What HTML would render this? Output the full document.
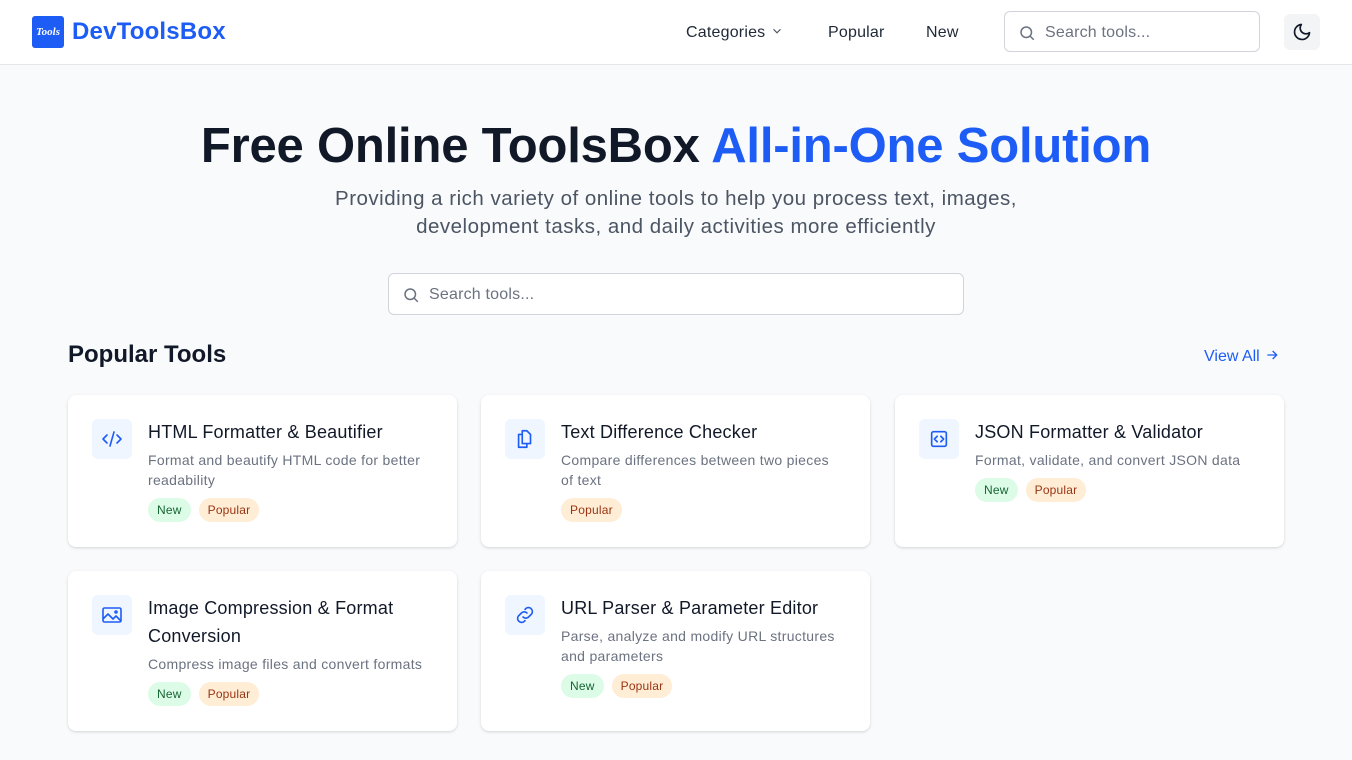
<!DOCTYPE html>
<html><head><meta charset="utf-8"><style>
*{box-sizing:border-box;margin:0;padding:0}
body{width:1352px;height:760px;overflow:hidden;background:#f9fafb;font-family:"Liberation Sans",sans-serif;color:#111827}
header{height:65px;background:#fff;border-bottom:1px solid #e5e7eb;position:relative}
.logo{position:absolute;left:32px;top:16px;display:flex;align-items:center}
.lbox{width:32px;height:32px;background:#1d5cf5;border-radius:3px;color:#fff;font:italic bold 11px "Liberation Serif",serif;display:flex;align-items:center;justify-content:center}
.lname{margin-left:8px;color:#1d5cf5;font-weight:bold;font-size:24px;letter-spacing:0.2px}
.nav{position:absolute;top:24px;font-size:16px;color:#1f2937;letter-spacing:0.2px}
.hs{position:absolute;left:1004px;top:11px;width:256px;height:41px;border:1px solid #d1d5db;border-radius:6px;font-size:16px;color:#6b7280;padding:12px 0 0 40px;letter-spacing:0.2px}
.dark{position:absolute;left:1284px;top:14px;width:36px;height:36px;background:#f3f4f6;border-radius:6px;display:flex;align-items:center;justify-content:center}
h1{position:absolute;top:118px;width:100%;text-align:center;font-size:49px;font-weight:bold;letter-spacing:-0.2px}
h1 span{color:#1d5cf5}
.sub{position:absolute;top:185px;width:100%;text-align:center;font-size:20.5px;line-height:28px;color:#4b5563;letter-spacing:0.5px}
.ms{position:absolute;left:388px;top:273px;width:576px;height:42px;background:#fff;border:1px solid #d1d5db;border-radius:6px;font-size:16px;color:#6b7280;padding:12px 0 0 40px;letter-spacing:0.2px}
h2{position:absolute;left:68px;top:341px;font-size:24px;font-weight:bold}
.va{position:absolute;left:1204px;top:347px;color:#1d5cf5;font-size:16px}
.card{position:absolute;width:389px;background:#fff;border-radius:8px;box-shadow:0 1px 3px rgba(0,0,0,.1),0 1px 2px rgba(0,0,0,.06);padding:23px 24px}
.ic{position:absolute;left:24px;top:24px;width:40px;height:40px;background:#eff6ff;border-radius:6px;display:flex;align-items:center;justify-content:center}
.tx{margin-left:56px}
.t{font-size:18px;line-height:28px;color:#111827;letter-spacing:0.2px}
.d{font-size:14px;line-height:20px;color:#6b7280;margin-top:4px;letter-spacing:0.3px}
.b{margin-top:8px;display:flex;gap:8px}
.b span{font-size:12px;height:24px;line-height:24px;padding:0 9px;border-radius:12px;letter-spacing:0.2px}
.n{background:#dcfce7;color:#166534}.p{background:#ffedd5;color:#9a3412}
</style></head><body>
<header>
<div class="logo"><div class="lbox">Tools</div><div class="lname">DevToolsBox</div></div>
<div class="nav" style="left:686px">Categories <svg width="14" height="14" viewBox="0 0 24 24" fill="none" stroke="#4b5563" stroke-width="2" style="vertical-align:-1px"><path d="M6 9l6 6 6-6"/></svg></div>
<div class="nav" style="left:828px">Popular</div>
<div class="nav" style="left:926px">New</div>
<div class="hs"><svg style="position:absolute;left:13px;top:12px" width="18" height="18" viewBox="0 0 24 24" fill="none" stroke="#6b7280" stroke-width="2"><circle cx="11" cy="11" r="7"/><path d="M21 21l-5-5"/></svg>Search tools...</div>
<div class="dark"><svg width="20" height="20" viewBox="0 0 24 24" fill="none" stroke="#111827" stroke-width="2" stroke-linecap="round" stroke-linejoin="round"><path d="M21 12.8A9 9 0 1 1 11.2 3a7 7 0 0 0 9.8 9.8z"/></svg></div>
</header>
<h1>Free Online ToolsBox <span>All-in-One Solution</span></h1>
<div class="sub">Providing a rich variety of online tools to help you process text, images,<br>development tasks, and daily activities more efficiently</div>
<div class="ms"><svg style="position:absolute;left:13px;top:12px" width="18" height="18" viewBox="0 0 24 24" fill="none" stroke="#6b7280" stroke-width="2"><circle cx="11" cy="11" r="7"/><path d="M21 21l-5-5"/></svg>Search tools...</div>
<h2>Popular Tools</h2>
<div class="va">View All <svg width="16" height="16" viewBox="0 0 24 24" fill="none" stroke="#1d5cf5" stroke-width="2" style="vertical-align:-2px"><path d="M5 12h14M13 6l6 6-6 6"/></svg></div>

<div class="card" style="left:68px;top:395px;height:152px"><div class="ic"><svg width="24" height="24" viewBox="0 0 24 24" fill="none" stroke="#1d5cf5" stroke-width="1.6" stroke-linecap="round" stroke-linejoin="round"><path d="M7 8l-4 4 4 4M17 8l4 4-4 4M14 5l-4 14"/></svg></div><div class="tx"><div class="t">HTML Formatter &amp; Beautifier</div><div class="d">Format and beautify HTML code for better readability</div><div class="b"><span class="n">New</span><span class="p">Popular</span></div></div></div>

<div class="card" style="left:481px;top:395px;height:152px"><div class="ic"><svg width="22" height="22" viewBox="0 0 24 24" fill="none" stroke="#1d5cf5" stroke-width="1.8" stroke-linejoin="round"><path d="M9 3h5l4 4v10H9z"/><path d="M9 7H5v14h9v-4"/></svg></div><div class="tx"><div class="t">Text Difference Checker</div><div class="d">Compare differences between two pieces<br>of text</div><div class="b"><span class="p">Popular</span></div></div></div>

<div class="card" style="left:895px;top:395px;height:152px"><div class="ic"><svg width="22" height="22" viewBox="0 0 24 24" fill="none" stroke="#1d5cf5" stroke-width="1.8" stroke-linecap="round" stroke-linejoin="round"><rect x="4" y="4" width="16" height="16" rx="2"/><path d="M10 9l-3 3 3 3M14 9l3 3-3 3"/></svg></div><div class="tx"><div class="t">JSON Formatter &amp; Validator</div><div class="d">Format, validate, and convert JSON data</div><div class="b"><span class="n">New</span><span class="p">Popular</span></div></div></div>

<div class="card" style="left:68px;top:571px;height:160px"><div class="ic"><svg width="24" height="24" viewBox="0 0 24 24" fill="none" stroke="#1d5cf5" stroke-width="1.6" stroke-linejoin="round"><rect x="3" y="5" width="18" height="14" rx="1.5"/><path d="M3 16l5-5 5 5 3-3 5 5"/><circle cx="16" cy="9" r="1"/></svg></div><div class="tx"><div class="t">Image Compression &amp; Format Conversion</div><div class="d">Compress image files and convert formats</div><div class="b"><span class="n">New</span><span class="p">Popular</span></div></div></div>

<div class="card" style="left:481px;top:571px;height:160px"><div class="ic"><svg width="24" height="24" viewBox="0 0 24 24" fill="none" stroke="#1d5cf5" stroke-width="1.6" stroke-linecap="round"><path d="M10 14a4 4 0 0 0 5.6 0l3-3a4 4 0 0 0-5.6-5.6l-1 1"/><path d="M14 10a4 4 0 0 0-5.6 0l-3 3a4 4 0 0 0 5.6 5.6l1-1"/></svg></div><div class="tx"><div class="t">URL Parser &amp; Parameter Editor</div><div class="d">Parse, analyze and modify URL structures and parameters</div><div class="b"><span class="n">New</span><span class="p">Popular</span></div></div></div>
</body></html>
